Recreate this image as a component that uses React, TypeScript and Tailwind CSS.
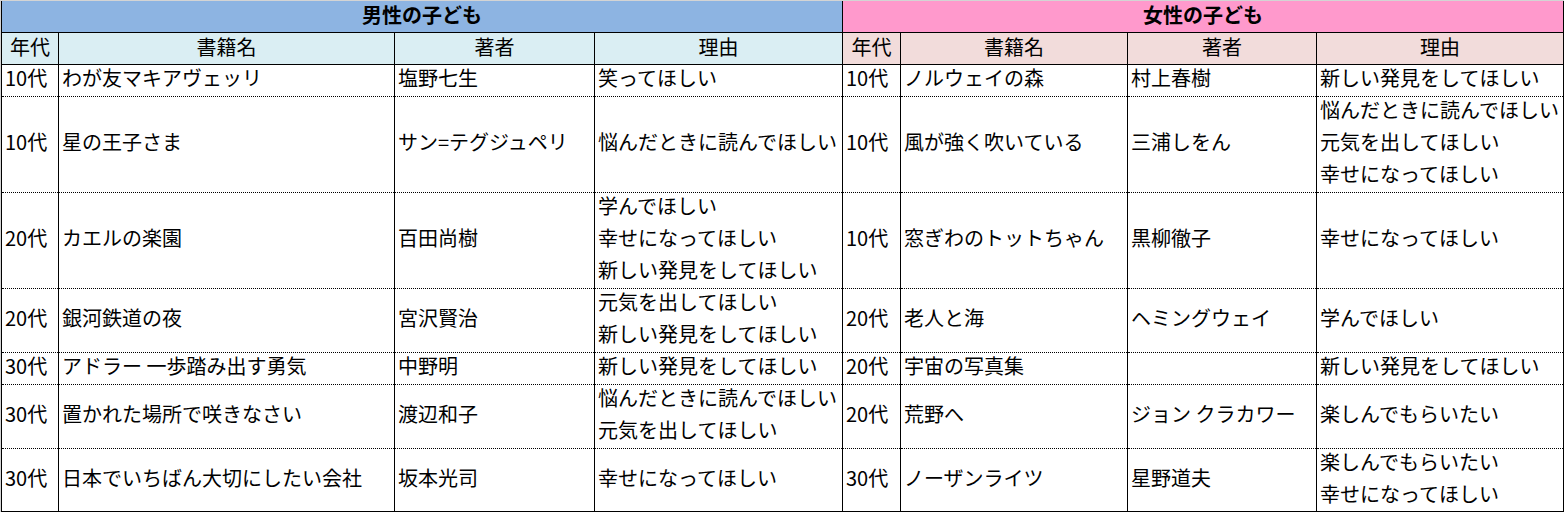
type Book = { age: string; title: string; author: string; reasons: string[] };

const boys: Book[] = [
  { age: "10代", title: "わが友マキアヴェッリ", author: "塩野七生", reasons: ["笑ってほしい"] },
  { age: "10代", title: "星の王子さま", author: "サン=テグジュペリ", reasons: ["悩んだときに読んでほしい"] },
  { age: "20代", title: "カエルの楽園", author: "百田尚樹", reasons: ["学んでほしい", "幸せになってほしい", "新しい発見をしてほしい"] },
  { age: "20代", title: "銀河鉄道の夜", author: "宮沢賢治", reasons: ["元気を出してほしい", "新しい発見をしてほしい"] },
  { age: "30代", title: "アドラー 一歩踏み出す勇気", author: "中野明", reasons: ["新しい発見をしてほしい"] },
  { age: "30代", title: "置かれた場所で咲きなさい", author: "渡辺和子", reasons: ["悩んだときに読んでほしい", "元気を出してほしい"] },
  { age: "30代", title: "日本でいちばん大切にしたい会社", author: "坂本光司", reasons: ["幸せになってほしい"] },
];

const girls: Book[] = [
  { age: "10代", title: "ノルウェイの森", author: "村上春樹", reasons: ["新しい発見をしてほしい"] },
  { age: "10代", title: "風が強く吹いている", author: "三浦しをん", reasons: ["悩んだときに読んでほしい", "元気を出してほしい", "幸せになってほしい"] },
  { age: "10代", title: "窓ぎわのトットちゃん", author: "黒柳徹子", reasons: ["幸せになってほしい"] },
  { age: "20代", title: "老人と海", author: "ヘミングウェイ", reasons: ["学んでほしい"] },
  { age: "20代", title: "宇宙の写真集", author: "", reasons: ["新しい発見をしてほしい"] },
  { age: "20代", title: "荒野へ", author: "ジョン クラカワー", reasons: ["楽しんでもらいたい"] },
  { age: "30代", title: "ノーザンライツ", author: "星野道夫", reasons: ["楽しんでもらいたい", "幸せになってほしい"] },
];

// row heights incl. bottom border, taken from the sheet
const heights = ["h-[32px]", "h-[96px]", "h-[96px]", "h-[64px]", "h-[32px]", "h-[64px]", "h-[63px]"];

function Cell({ lines, h, last }: { lines: string[]; h: string; last: boolean }) {
  return (
    <div className={`${h} flex flex-col border-r border-black`}>
      <div className="flex-1 min-h-0 flex flex-col justify-center pl-[3px] pb-[5px] whitespace-nowrap leading-[32px]">
        {lines.map((l, i) => (
          <div key={i} className="shrink-0">
            {l}
          </div>
        ))}
      </div>
      <div className={last ? "shrink-0 border-t border-black" : "shrink-0 border-t border-dotted border-black"} />
    </div>
  );
}

function HeadCell({ label, bg }: { label: string; bg: string }) {
  return (
    <div className={`h-[32px] flex items-center justify-center pb-[4px] border-r border-b border-black ${bg}`}>
      {label}
    </div>
  );
}

export default function App() {
  return (
    <div className="min-h-screen bg-white">
      <div className="bg-[#d4d4d4] pl-px pt-px w-fit">
        <div
          className="grid grid-cols-[57px_336px_200px_248px_58px_227px_189px_247px] border-l border-black bg-white text-[20px] text-black"
          style={{ fontFamily: '"Noto Sans CJK JP", "Noto Sans", sans-serif' }}
        >
          <div className="col-span-4 h-[32px] flex items-center justify-center pb-[4px] border-r border-b border-black bg-[#8db4e2] font-bold">
            男性の子ども
          </div>
          <div className="col-span-4 h-[32px] flex items-center justify-center pb-[4px] border-r border-b border-black bg-[#ff99cc] font-bold">
            女性の子ども
          </div>

          {["年代", "書籍名", "著者", "理由"].map((l) => (
            <HeadCell key={"b" + l} label={l} bg="bg-[#daeef3]" />
          ))}
          {["年代", "書籍名", "著者", "理由"].map((l) => (
            <HeadCell key={"g" + l} label={l} bg="bg-[#f2dcdb]" />
          ))}

          {boys.map((b, i) => {
            const g = girls[i];
            const h = heights[i];
            const last = i === boys.length - 1;
            return [
              <Cell key={`a${i}`} lines={[b.age]} h={h} last={last} />,
              <Cell key={`b${i}`} lines={[b.title]} h={h} last={last} />,
              <Cell key={`c${i}`} lines={[b.author]} h={h} last={last} />,
              <Cell key={`d${i}`} lines={b.reasons} h={h} last={last} />,
              <Cell key={`e${i}`} lines={[g.age]} h={h} last={last} />,
              <Cell key={`f${i}`} lines={[g.title]} h={h} last={last} />,
              <Cell key={`g${i}`} lines={[g.author]} h={h} last={last} />,
              <Cell key={`h${i}`} lines={g.reasons} h={h} last={last} />,
            ];
          })}
        </div>
      </div>
    </div>
  );
}
